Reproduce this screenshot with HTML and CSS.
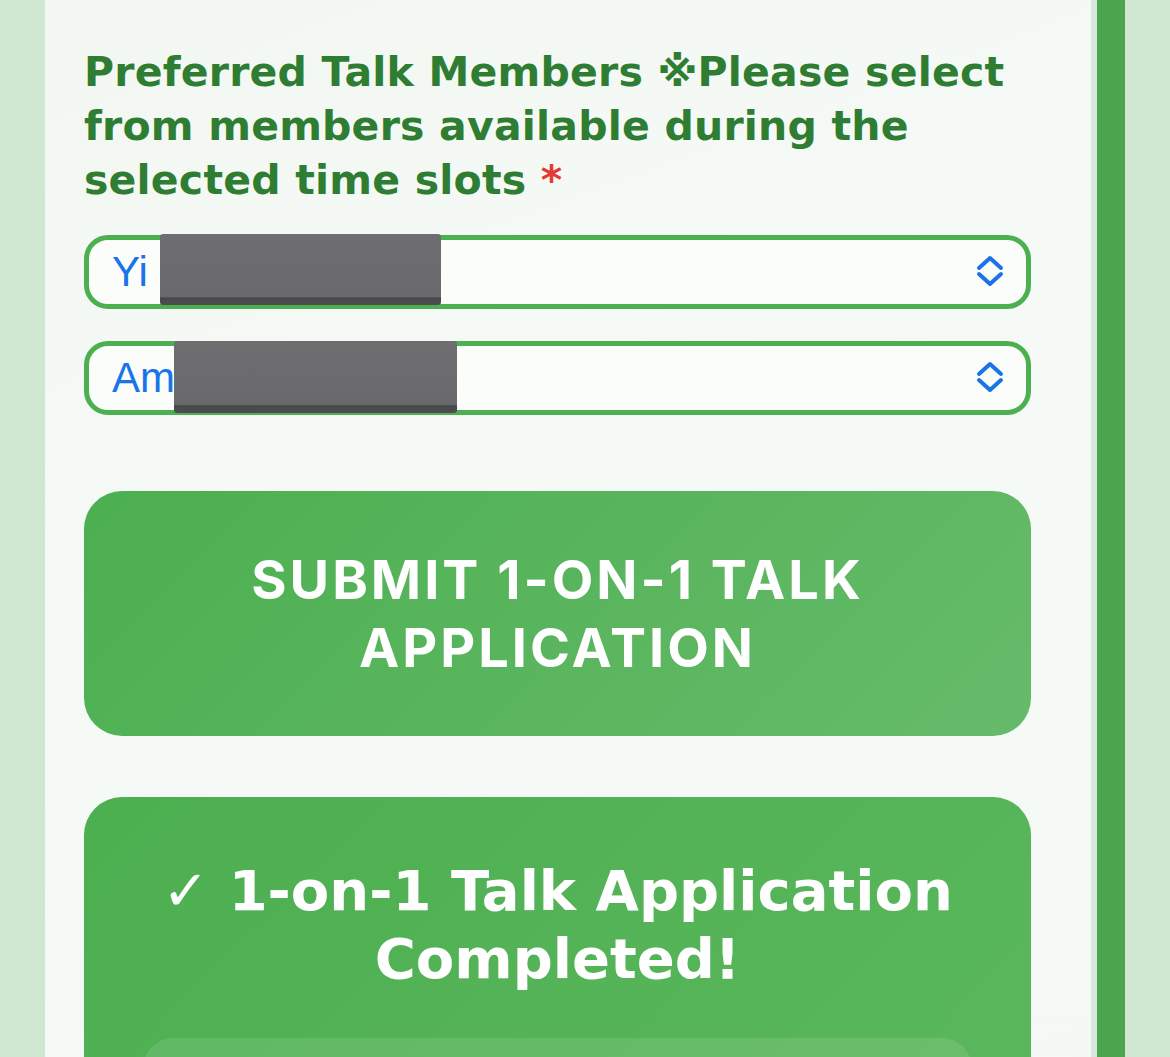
FILE: index.html
```html
<!DOCTYPE html>
<html lang="en">
<head>
    <meta charset="UTF-8">
    <meta name="viewport" content="width=device-width, initial-scale=1.0">
    <title>1-on-1 Talk Application</title>
    <link rel="stylesheet" href="styles.css">
</head>
<body>
    <div class="page">
        <div class="card">
            <div class="form-group">
                <label class="form-label">Preferred Talk Members ※Please select from members available during the selected time slots <span class="required">*</span></label>

                <div class="select-box">
                    <span class="select-value">Yi</span>
                    <svg class="chevron" viewBox="0 0 28 32" width="28" height="32">
                        <path d="M3 13 L14 3 L25 13 M3 19 L14 29 L25 19" fill="none" stroke="currentColor" stroke-width="4" stroke-linecap="round" stroke-linejoin="round"/>
                    </svg>
                    <div class="redact redact-1"></div>
                </div>

                <div class="select-box">
                    <span class="select-value">Am</span>
                    <svg class="chevron" viewBox="0 0 28 32" width="28" height="32">
                        <path d="M3 13 L14 3 L25 13 M3 19 L14 29 L25 19" fill="none" stroke="currentColor" stroke-width="4" stroke-linecap="round" stroke-linejoin="round"/>
                    </svg>
                    <div class="redact redact-2"></div>
                </div>
            </div>

            <button class="submit-btn">SUBMIT 1-ON-1 TALK APPLICATION</button>

            <div class="success-box">
                <h2>✓ 1-on-1 Talk Application Completed!</h2>
                <div class="success-detail"></div>
            </div>
        </div>
        <div class="card-edge"></div>
        <div class="side-bar"></div>
    </div>
</body>
</html>
```

FILE: styles.css
```css
:root {
    --green: #4caf50;
    --green-light: #66bb6a;
    --green-dark: #2e7d32;
    --page-bg: #d0e7d2;
    --card-bg: #f5f9f5;
    --select-text: #1a73e8;
    --danger: #e53935;
}

body {
    margin: 0;
    padding: 0;
    background-color: var(--page-bg);
    font-family: "DejaVu Sans", Verdana, sans-serif;
    overflow: hidden;
}

.page {
    display: flex;
    height: 100vh;
    padding-left: 45px;
    padding-right: 45px;
}

.card {
    flex: 1;
    background: linear-gradient(160deg, #f2f7f2 0%, #f6faf6 40%, #f5f9f5 100%);
    padding: 45px 60px 0 39px;
}

.card-edge {
    width: 6px;
    background-color: #dce7dc;
}

.side-bar {
    width: 28px;
    background-color: #4aa54e;
}

.form-label {
    display: block;
    color: var(--green-dark);
    font-weight: bold;
    font-size: 41px;
    line-height: 54px;
    letter-spacing: 0.2px;
    margin-bottom: 28px;
}

.required {
    color: var(--danger);
}

.select-box {
    position: relative;
    display: flex;
    align-items: center;
    justify-content: space-between;
    height: 74px;
    box-sizing: border-box;
    border: 5px solid var(--green);
    border-radius: 24px;
    background-color: #fbfdfb;
    padding: 0 22px 0 23px;
    margin-bottom: 32px;
    color: var(--select-text);
}

.select-value {
    font-family: "Liberation Sans", Arial, sans-serif;
    font-size: 42px;
}

.chevron {
    margin-top: -2px;
}

.redact {
    position: absolute;
    background: linear-gradient(180deg, #6e6e70 0%, #6a6a6c 88%, #48484b 90%, #4e4e52 100%);
    border-radius: 3px;
}

.redact-1 {
    left: 71px;
    top: -6px;
    width: 281px;
    height: 71px;
}

.redact-2 {
    left: 85px;
    top: -5px;
    width: 283px;
    height: 72px;
}

.submit-btn {
    display: block;
    width: 100%;
    margin-top: 76px;
    height: 245px;
    padding: 0 100px;
    border: none;
    border-radius: 38px;
    background: linear-gradient(135deg, var(--green) 0%, var(--green-light) 100%);
    color: white;
    font-family: Inter, "Liberation Sans", sans-serif;
    font-weight: 700;
    font-size: 54px;
    line-height: 68px;
    letter-spacing: 3px;
    text-transform: uppercase;
    cursor: pointer;
}

.success-box {
    margin-top: 61px;
    padding: 60px 59px 0;
    height: 400px;
    border-radius: 38px;
    background: linear-gradient(135deg, #4caf50 0%, #5cb85e 100%);
    color: white;
    text-align: center;
}

.success-box h2 {
    margin: 0 0 45px;
    font-size: 56px;
    line-height: 68px;
    font-weight: bold;
}

.success-detail {
    height: 200px;
    border-radius: 30px;
    background-color: rgba(255, 255, 255, 0.1);
}
```
